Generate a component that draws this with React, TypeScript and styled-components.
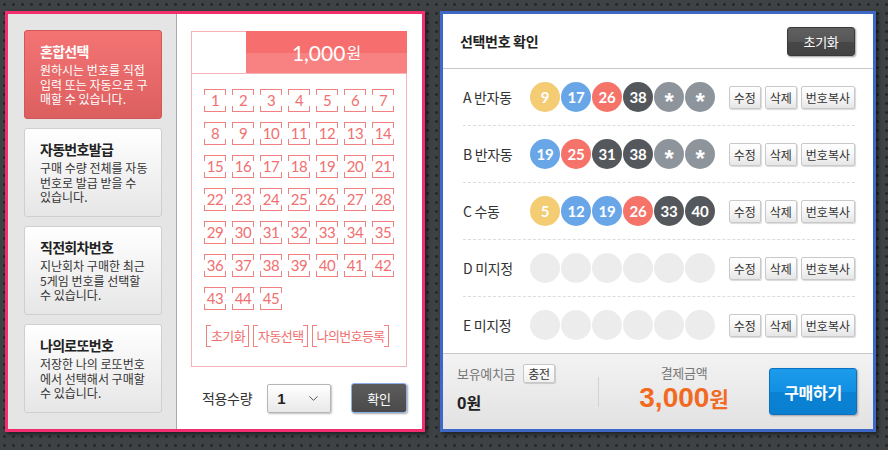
import React from "react";
import styled, { createGlobalStyle, css } from "styled-components";
import { ChevronDown } from "lucide-react";

const KR = `"Noto Sans CJK KR", "Noto Sans", sans-serif`;
const LATO = `Lato, "Noto Sans CJK KR", sans-serif`;
const PINK = "#f28080";
const SALMON = "#f07070";

const GlobalStyle = createGlobalStyle`
  html, body { margin: 0; padding: 0; }
  body {
    width: 888px;
    height: 450px;
    overflow: hidden;
    background-color: #3e4245;
    background-image: radial-gradient(circle at 4.5px 4.5px, #25282a 1.1px, transparent 1.7px);
    background-size: 9px 9px;
    font-family: ${KR};
    letter-spacing: -0.02em;
  }
`;

const Page = styled.div`
  display: flex;
  align-items: flex-start;
  gap: 15px;
  padding: 11px 0 0 5px;
`;

/* ---------- left panel ---------- */
const LeftPanel = styled.section`
  width: 420px;
  height: 421px;
  box-sizing: border-box;
  border: 3px solid #f22e6e;
  display: flex;
  box-shadow: 2px 2px 4px rgba(0, 0, 0, 0.55);
`;

const Sidebar = styled.nav`
  width: 169px;
  box-sizing: border-box;
  background: #e5e5e5;
  border-right: 1px solid #a9a9a9;
  padding: 16px 14px 0 16px;
  display: flex;
  flex-direction: column;
  gap: 9px;
`;

const ModeButton = styled.div<{ $active?: boolean }>`
  height: 89px;
  box-sizing: border-box;
  border-radius: 3px;
  border: 1px solid #cfcfcf;
  padding: 11px 0 0 15px;
  background: linear-gradient(#ffffff, #e6e6e6);
  color: #222;
  ${(p) =>
    p.$active &&
    css`
      background: linear-gradient(#f47474, #dc5f5f);
      border-color: #d45656;
      color: #fff;
    `}
`;

const ModeTitle = styled.div`
  font-size: 14px;
  font-weight: 700;
  line-height: 18px;
  letter-spacing: -0.05em;
`;

const ModeDesc = styled.div<{ $active?: boolean }>`
  margin-top: 3px;
  font-size: 12px;
  line-height: 14.5px;
  letter-spacing: 0;
  color: ${(p) => (p.$active ? "#fff" : "#333")};
`;

const DescLine = styled.div`
  height: 14.5px;
`;

const Main = styled.div`
  flex: 1;
  background: #fff;
  padding: 17px 15px 0 14px;
  display: flex;
  flex-direction: column;
`;

const Card = styled.div`
  width: 216px;
  height: 336px;
  box-sizing: border-box;
  border: 1px solid #f6b3b7;
`;

const CardHeader = styled.div`
  display: flex;
  height: 41px;
  border-bottom: 1px solid #f6b3b7;
`;

const HeaderSpacer = styled.div`
  width: 54px;
`;

const Price = styled.div`
  flex: 1;
  margin: -1px -1px 0 0;
  background: linear-gradient(#f66e6e 0 52%, #f88282 52% 100%);
  color: #fff;
  display: flex;
  align-items: center;
  justify-content: center;
  font-family: ${LATO};
  font-size: 21px;
  letter-spacing: 0;
`;

const PriceUnit = styled.span`
  font-family: ${KR};
  font-size: 16px;
  margin-left: 1px;
`;

const NumGrid = styled.div`
  display: grid;
  grid-template-columns: repeat(7, 22px);
  column-gap: 6px;
  row-gap: 10px;
  padding: 15px 0 0 12px;
`;

const tick = (w: string, h: string) => css`
  background: linear-gradient(${PINK}, ${PINK}) left top / ${w} ${h} no-repeat,
    linear-gradient(${PINK}, ${PINK}) right top / ${w} ${h} no-repeat,
    linear-gradient(${PINK}, ${PINK}) left bottom / ${w} ${h} no-repeat,
    linear-gradient(${PINK}, ${PINK}) right bottom / ${w} ${h} no-repeat;
`;

const NumCell = styled.div`
  height: 23px;
  box-sizing: border-box;
  border-top: 1px solid ${PINK};
  border-bottom: 1px solid ${PINK};
  ${tick("1px", "5px")}
  color: ${SALMON};
  font-family: ${LATO};
  font-size: 15px;
  line-height: 21px;
  text-align: center;
  letter-spacing: -0.5px;
`;

const BracketRow = styled.div`
  display: flex;
  gap: 4px;
  margin: 15px 0 0 14px;
`;

const BracketButton = styled.div`
  height: 22px;
  box-sizing: border-box;
  border-left: 1px solid ${PINK};
  border-right: 1px solid ${PINK};
  ${tick("4px", "1px")}
  padding: 0 3px 0 4px;
  color: ${SALMON};
  font-size: 13px;
  line-height: 22px;
  letter-spacing: -0.6px;
`;

const ApplyRow = styled.div`
  display: flex;
  align-items: center;
  margin-top: 16px;
  height: 30px;
  padding-left: 11px;
  width: 216px;
  box-sizing: border-box;
`;

const ApplyLabel = styled.span`
  font-size: 14px;
  color: #333;
`;

const Select = styled.div`
  margin-left: 15px;
  width: 64px;
  height: 29px;
  box-sizing: border-box;
  border: 1px solid #b5b5b5;
  border-radius: 2px;
  background: linear-gradient(#ffffff, #e8e8e8);
  box-shadow: 1px 1px 2px rgba(0, 0, 0, 0.25);
  display: flex;
  align-items: center;
  justify-content: space-between;
  padding: 0 9px 0 9px;
  color: #222;
  font-family: "Liberation Sans", sans-serif;
  font-weight: 700;
  font-size: 15px;
  letter-spacing: 0;
`;

const ConfirmButton = styled.div`
  margin-left: auto;
  width: 56px;
  height: 30px;
  box-sizing: border-box;
  border: 1px solid #8caeea;
  border-radius: 3px;
  background: linear-gradient(#5c5c5c 0%, #525252 55%, #4a4a4a 100%);
  box-shadow: 1px 1px 2px rgba(0, 0, 0, 0.35);
  color: #fff;
  font-size: 13px;
  display: flex;
  align-items: center;
  justify-content: center;
`;

/* ---------- right panel ---------- */
const RightPanel = styled.section`
  width: 436px;
  height: 421px;
  box-sizing: border-box;
  border: 3px solid #3f67c6;
  background: #fff;
  display: flex;
  flex-direction: column;
  box-shadow: 2px 2px 4px rgba(0, 0, 0, 0.55);
`;

const RightHeader = styled.header`
  height: 54px;
  flex: none;
  border-bottom: 1px solid #c8c8c8;
  display: flex;
  align-items: center;
  justify-content: space-between;
  padding: 0 18px 0 17px;
`;

const RightTitle = styled.h2`
  margin: 0;
  font-size: 14px;
  font-weight: 700;
  color: #222;
`;

const DarkButton = styled.div`
  width: 68px;
  height: 29px;
  box-sizing: border-box;
  border: 1px solid #3a3a3a;
  border-radius: 3px;
  background: linear-gradient(#606060 0%, #565656 50%, #474747 51%, #434343 100%);
  box-shadow: 1px 1px 2px rgba(0, 0, 0, 0.4);
  color: #fff;
  font-size: 13px;
  display: flex;
  align-items: center;
  justify-content: center;
`;

const Rows = styled.div`
  padding: 0 18px 0 20px;
`;

const Row = styled.div`
  height: 56px;
  display: flex;
  align-items: center;
  border-bottom: 1px dashed #dcdcdc;
  &:last-child {
    border-bottom: none;
  }
`;

const RowLabel = styled.div`
  width: 67px;
  font-size: 14px;
  color: #333;
`;

const Balls = styled.div`
  display: flex;
  gap: 1px;
`;

const BALL_COLORS: Record<string, string> = {
  y: "#f3cc73",
  b: "#68a6e8",
  r: "#f6736a",
  d: "#54575b",
  g: "#8e949c",
  e: "#ececec",
};

const Ball = styled.div<{ $c: string; $star?: boolean }>`
  width: 30px;
  height: 30px;
  border-radius: 50%;
  background: ${(p) => BALL_COLORS[p.$c]};
  color: #fff;
  font-family: ${LATO};
  font-weight: 700;
  font-size: 15px;
  letter-spacing: -0.3px;
  display: flex;
  align-items: center;
  justify-content: center;
  ${(p) =>
    p.$star &&
    css`
      font-family: "Liberation Sans", sans-serif;
      font-size: 24px;
      padding-top: 9px;
      box-sizing: border-box;
    `}
`;

const Actions = styled.div`
  margin-left: auto;
  display: flex;
  gap: 4px;
`;

const SmallButton = styled.div`
  height: 23px;
  box-sizing: border-box;
  padding: 0 4px;
  border: 1px solid #c9c9c9;
  border-radius: 2px;
  background: linear-gradient(#ffffff 0%, #f6f6f6 50%, #e6e6e6 100%);
  box-shadow: 1px 1px 1px rgba(0, 0, 0, 0.15);
  font-size: 12px;
  line-height: 21px;
  letter-spacing: 0;
  color: #333;
`;

const Footer = styled.footer`
  flex: 1;
  background: linear-gradient(#f3f3f3, #e2e2e2);
  border-top: 1px solid #c8c8c8;
  display: flex;
  align-items: center;
  padding: 0 16px 0 14px;
`;

const Balance = styled.div`
  width: 141px;
  display: flex;
  flex-direction: column;
  gap: 7px;
  margin-top: -5px;
`;

const BalanceTop = styled.div`
  display: flex;
  align-items: center;
  gap: 8px;
`;

const MutedLabel = styled.span`
  font-size: 13px;
  color: #777;
`;

const ChargeButton = styled.div`
  height: 19px;
  box-sizing: border-box;
  padding: 0 4px;
  border: 1px solid #c8c8c8;
  border-radius: 2px;
  background: linear-gradient(#ffffff, #f0f0f0);
  box-shadow: 1px 1px 1px rgba(0, 0, 0, 0.15);
  font-size: 12px;
  line-height: 17px;
  color: #333;
`;

const BalanceValue = styled.div`
  font-family: "Liberation Sans", sans-serif;
  font-weight: 700;
  font-size: 17px;
  color: #222;
  letter-spacing: 0;
`;

const KrUnit = styled.span<{ $size: number }>`
  font-family: ${KR};
  font-size: ${(p) => p.$size}px;
`;

const Divider = styled.div`
  width: 1px;
  height: 30px;
  background: #d2d2d2;
`;

const Total = styled.div`
  flex: 1;
  display: flex;
  flex-direction: column;
  align-items: center;
  margin-top: -6px;
`;

const TotalValue = styled.div`
  font-family: "Liberation Sans", sans-serif;
  font-weight: 700;
  font-size: 28px;
  line-height: 32px;
  color: #f26a21;
  letter-spacing: 0;
`;

const BuyButton = styled.div`
  width: 88px;
  height: 47px;
  box-sizing: border-box;
  border: 1px solid #0b72c2;
  border-radius: 3px;
  background: linear-gradient(#1c9beb 0%, #118fe2 50%, #0a82d4 51%, #0a7fd0 100%);
  box-shadow: 1px 1px 2px rgba(0, 0, 0, 0.3);
  color: #fff;
  font-size: 16px;
  font-weight: 700;
  display: flex;
  align-items: center;
  justify-content: center;
`;

const modes = [
  { title: "혼합선택", lines: ["원하시는 번호를 직접", "입력 또는 자동으로 구", "매할 수 있습니다."], active: true },
  { title: "자동번호발급", lines: ["구매 수량 전체를 자동", "번호로 발급 받을 수", "있습니다."] },
  { title: "직전회차번호", lines: ["지난회차 구매한 최근", "5게임 번호를 선택할", "수 있습니다."] },
  { title: "나의로또번호", lines: ["저장한 나의 로또번호", "에서 선택해서 구매할", "수 있습니다."] },
];

type B = [string, string];
const rows: { label: string; balls: B[] }[] = [
  { label: "A 반자동", balls: [["9", "y"], ["17", "b"], ["26", "r"], ["38", "d"], ["*", "g"], ["*", "g"]] },
  { label: "B 반자동", balls: [["19", "b"], ["25", "r"], ["31", "d"], ["38", "d"], ["*", "g"], ["*", "g"]] },
  { label: "C 수동", balls: [["5", "y"], ["12", "b"], ["19", "b"], ["26", "r"], ["33", "d"], ["40", "d"]] },
  { label: "D 미지정", balls: Array.from({ length: 6 }, () => ["", "e"] as B) },
  { label: "E 미지정", balls: Array.from({ length: 6 }, () => ["", "e"] as B) },
];

export default function App() {
  return (
    <>
      <GlobalStyle />
      <Page>
        <LeftPanel>
          <Sidebar>
            {modes.map((m) => (
              <ModeButton key={m.title} $active={m.active}>
                <ModeTitle>{m.title}</ModeTitle>
                <ModeDesc $active={m.active}>
                  {m.lines.map((l, i) => (
                    <DescLine key={i}>{l}</DescLine>
                  ))}
                </ModeDesc>
              </ModeButton>
            ))}
          </Sidebar>
          <Main>
            <Card>
              <CardHeader>
                <HeaderSpacer />
                <Price>
                  1,000<PriceUnit>원</PriceUnit>
                </Price>
              </CardHeader>
              <NumGrid>
                {Array.from({ length: 45 }, (_, i) => (
                  <NumCell key={i}>{i + 1}</NumCell>
                ))}
              </NumGrid>
              <BracketRow>
                <BracketButton>초기화</BracketButton>
                <BracketButton>자동선택</BracketButton>
                <BracketButton>나의번호등록</BracketButton>
              </BracketRow>
            </Card>
            <ApplyRow>
              <ApplyLabel>적용수량</ApplyLabel>
              <Select>
                1
                <ChevronDown size={15} strokeWidth={1.6} color="#555" />
              </Select>
              <ConfirmButton>확인</ConfirmButton>
            </ApplyRow>
          </Main>
        </LeftPanel>

        <RightPanel>
          <RightHeader>
            <RightTitle>선택번호 확인</RightTitle>
            <DarkButton>초기화</DarkButton>
          </RightHeader>
          <Rows>
            {rows.map((r) => (
              <Row key={r.label}>
                <RowLabel>{r.label}</RowLabel>
                <Balls>
                  {r.balls.map(([n, c], i) => (
                    <Ball key={i} $c={c} $star={n === "*"}>
                      {n}
                    </Ball>
                  ))}
                </Balls>
                <Actions>
                  <SmallButton>수정</SmallButton>
                  <SmallButton>삭제</SmallButton>
                  <SmallButton>번호복사</SmallButton>
                </Actions>
              </Row>
            ))}
          </Rows>
          <Footer>
            <Balance>
              <BalanceTop>
                <MutedLabel>보유예치금</MutedLabel>
                <ChargeButton>충전</ChargeButton>
              </BalanceTop>
              <BalanceValue>
                0<KrUnit $size={16}>원</KrUnit>
              </BalanceValue>
            </Balance>
            <Divider />
            <Total>
              <MutedLabel>결제금액</MutedLabel>
              <TotalValue>
                3,000<KrUnit $size={21}>원</KrUnit>
              </TotalValue>
            </Total>
            <BuyButton>구매하기</BuyButton>
          </Footer>
        </RightPanel>
      </Page>
    </>
  );
}
